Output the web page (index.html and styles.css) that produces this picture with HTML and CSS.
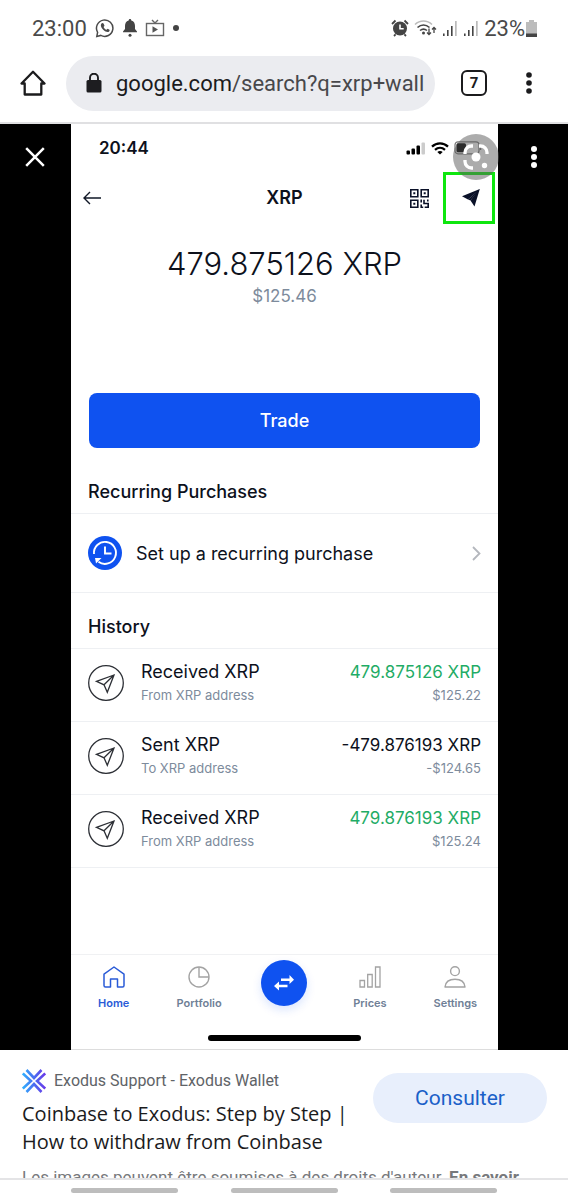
FILE: index.html
```html
<!DOCTYPE html>
<html lang="fr">
<head>
<meta charset="utf-8">
<meta name="viewport" content="width=device-width, initial-scale=1">
<title>XRP wallet</title>
<link rel="stylesheet" href="styles.css">
</head>
<body>
<svg class="defs" width="0" height="0" aria-hidden="true">
  <symbol id="plane" viewBox="1 1 36 36">
    <circle cx="19" cy="19" r="17.300"/>
    <path d="M27 11 9.500 17.300l7.500 3.500 3.300 7.500z M27 11 17 20.800"/>
  </symbol>
</svg>

<header class="device-status">
  <div class="status-group">
    <span class="clock">23:00</span>
    <svg class="whatsapp" width="20" height="20" viewBox="0 0 20 20" fill="none" stroke="#4a4a4a" stroke-width="1.500"><path d="M2.600 14.300A8.200 8.200 0 1 1 5.800 17.400L1.800 18.400z"/><path d="M6.300 5.700c-1 1.300-.5 3.600 1.900 6 2.300 2.200 4.700 2.800 5.900 1.700.8-.8.600-1.500-.1-1.900l-1.300-.7-1.200 1c-1.200-.5-2.400-1.700-2.900-2.900l.9-1.200-.7-1.700c-.4-.9-1.700-1.300-2.500-.3z" fill="#4a4a4a" stroke="none"/></svg>
    <svg class="bell" width="14" height="18" viewBox="0 0 14 18" fill="#444"><path d="M7 0c.9 0 1.300.6 1.300 1.500C11 2.300 12 4.500 12 7v3l2 2.500v.8H0v-.8L2 10V7c0-2.500 1-4.700 3.700-5.500C5.700.6 6.100 0 7 0z"/><circle cx="7" cy="16.300" r="1.500"/></svg>
    <svg width="20" height="18" viewBox="0 0 20 18" fill="none" stroke="#666" stroke-width="1.400"><rect x="1.500" y="4.500" width="17" height="12"/><path d="M7 1l3 3 3-3"/><path d="M7.500 7.300v6.400l5.500-3.200z" fill="#555" stroke="none"/></svg>
    <span class="status-dot"></span>
  </div>
  <div class="status-group status-right">
    <svg width="18" height="18" viewBox="0 0 18 18" fill="none" stroke="#444" stroke-width="1.800"><circle cx="9" cy="9.500" r="7" fill="#444" stroke="none"/><path d="M1 5l3.500-3.500M17 5l-3.500-3.500M3 17l1.600-1.600M15 17l-1.600-1.600"/><path d="M9 5.500v4.300h3.700" stroke="#fff" stroke-width="1.600"/></svg>
    <svg class="wifi" width="23" height="18" viewBox="0 0 23 18" fill="none" stroke="#444" stroke-width="1.600"><path d="M1 5.500C6 .8 13 .8 18 5.500" stroke="#bbb"/><path d="M3.500 8.500c3.600-3.200 8.400-3.200 12 0M6 11.500c2.200-1.800 4.800-1.800 7 0"/><circle cx="9.500" cy="14" r="1.500" fill="#444" stroke="none"/><path d="M15 9.500v6M13 13.500l2 2 2-2M20 14V8.500M18 10.500l2-2 2 2" stroke-width="1.300"/></svg>
    <svg width="16" height="17" viewBox="0 0 16 17" fill="#444"><path d="M1 13.500h1.600V16H1zM5 10h1.600v6H5zM9 6h1.600v10H9z"/><path d="M13 1h1.700v15H13z" fill="#bbb"/></svg>
    <svg width="16" height="17" viewBox="0 0 16 17" fill="#444"><path d="M1 13.500h1.600V16H1zM5 10h1.600v6H5zM9 6h1.600v10H9z"/><path d="M13 1h1.700v15H13z" fill="#bbb"/></svg>
    <span class="battery-text">23%</span>
    <svg class="battery" width="11" height="17" viewBox="0 0 11 17"><path d="M3 0h5v2h3v15H0V2h3z" fill="#bcbcbc"/><path d="M0 13.500h11V17H0z" fill="#444"/></svg>
  </div>
</header>

<nav class="toolbar" aria-label="Navigateur">
  <button class="icon-button" aria-label="Accueil"><svg width="26" height="26" viewBox="0 0 26 26" fill="none" stroke="#1b1b1d" stroke-width="2.300" stroke-linejoin="round"><path d="M1.500 13.500 13 1.700 24.500 13.500H21.300V24.500H4.700V13.500z"/></svg></button>
  <a class="address" href="#">
    <svg width="16" height="20" viewBox="0 0 16 20"><rect x="0.500" y="7" width="15" height="12.500" rx="1.500" fill="#1d1d20"/><path d="M4 8V4.700a4 4 0 0 1 8 0V8" fill="none" stroke="#1d1d20" stroke-width="1.900"/></svg>
    <span class="url"><span class="host">google.com</span>/search?q=xrp+wall</span>
  </a>
  <button class="tabs" aria-label="Onglets">7</button>
  <button class="icon-button" aria-label="Menu"><svg width="6" height="24" viewBox="0 0 6 24" fill="#1b1b1d"><circle cx="3" cy="4" r="2.800"/><circle cx="3" cy="12" r="2.800"/><circle cx="3" cy="20" r="2.800"/></svg></button>
</nav>

<main class="viewer">
  <button class="side-button" aria-label="Fermer"><svg width="20" height="20" viewBox="0 0 20 20" stroke="#fff" stroke-width="2.500"><path d="M1.200 1.200 18.800 18.800M18.800 1.200 1.200 18.800"/></svg></button>

  <section class="phone">
    <div class="phone-status">
      <span>20:44</span>
      <div class="phone-signals">
        <svg width="20" height="13" viewBox="0 0 20 13"><rect x="0.500" y="8.500" width="3.500" height="4" rx="1"/><rect x="5.500" y="6.500" width="3.500" height="6" rx="1"/><rect x="10.500" y="3.500" width="3.500" height="9" rx="1"/><rect x="15.500" y="0.500" width="3.500" height="12" rx="1" fill="#ccc"/></svg>
        <svg width="18" height="13" viewBox="0 0 18 13" fill="none" stroke="#000" stroke-width="2.200"><path d="M1 4.600C5.500.2 12.500.2 17 4.600M4 7.900c3-2.700 7-2.700 10 0"/><path d="M9 12.500 6.300 9.900c1.500-1.300 3.900-1.300 5.400 0z" fill="#000" stroke="none"/></svg>
        <svg width="28" height="14" viewBox="0 0 28 14"><rect x="1" y="0.800" width="24" height="12" rx="3" fill="none" stroke="#777" stroke-width="1.200"/><rect x="2.500" y="2.300" width="9.500" height="9" rx="1.500"/><path d="M26.500 5v4" stroke="#777" stroke-width="1.500"/></svg>
      </div>
      <button class="lens" aria-label="Rechercher dans l'image"><svg width="26" height="26" viewBox="0 0 26 26" fill="none" stroke="#fff" stroke-width="3.300"><path d="M2 10V8.500A6.500 6.500 0 0 1 8.500 2H10M16 2h1.500A6.500 6.500 0 0 1 24 8.500V10M2 16v1.500A6.500 6.500 0 0 0 8.500 24H10"/><circle cx="13" cy="13" r="4.500" fill="#fff" stroke="none"/><circle cx="21.500" cy="21.500" r="2.700" fill="#fff" stroke="none"/></svg></button>
    </div>

    <header class="app-header">
      <button class="back" aria-label="Retour"><svg width="18" height="14" viewBox="0 0 18 14" fill="none" stroke="#111827" stroke-width="1.400"><path d="M18 7H1M7 1 1 7l6 6"/></svg></button>
      <h1>XRP</h1>
      <div class="app-actions">
        <button class="qr" aria-label="QR code"><svg width="19" height="19" viewBox="0 0 19 19" fill="none" stroke="#0a1128" stroke-width="1.600"><path d="M.8.800h7v7h-7zM11.200.800h7v7h-7zM.8 11.200h7v7h-7z"/><path d="M3.300 3.300h2v2h-2zM13.700 3.300h2v2h-2zM3.300 13.700h2v2h-2z" fill="#0a1128" stroke="none"/><path d="M14 10.800v3.700h4.200v3.700h-3.500M17.800 10.500v2M11.200 10.500v3M11.200 15.500v2.700h2"/></svg></button>
        <button class="send" aria-label="Send"><svg width="18" height="18" viewBox="0 0 18 18" fill="#0a1128"><path d="M17.800 0 0 7.300l6 3.200L14.500 3.200 8.500 11.500l4 6z"/><path d="M17.800 0 6 10.500l2.500 1z"/></svg></button>
      </div>
    </header>

    <div class="balance">
      <p class="amount">479.875126 XRP</p>
      <p class="fiat">$125.46</p>
    </div>

    <button class="trade">Trade</button>

    <h2 class="recurring-title">Recurring Purchases</h2>
    <a class="recurring" href="#">
      <svg width="34" height="34" viewBox="0 0 34 34"><circle cx="17" cy="17" r="17" fill="#0f52f0"/><g fill="none" stroke="#fff" stroke-width="1.900"><path d="M6 18A11 11 0 1 1 10.500 25.800"/><path d="M17 10.500v7h6.500"/></g><path d="M7 22h6.500L8 27.500z" fill="#fff"/></svg>
      <span>Set up a recurring purchase</span>
      <svg width="9" height="15" viewBox="0 0 9 15" fill="none" stroke="#b4b7bd" stroke-width="1.800"><path d="M1 1l6.500 6.500L1 14"/></svg>
    </a>

    <h2 class="history-title">History</h2>
    <ul class="history">
      <li>
        <svg class="plane"><use href="#plane"/></svg>
        <div class="entry"><span class="main">Received XRP</span><span class="sub">From XRP address</span></div>
        <div class="entry value"><span class="main gain">479.875126 XRP</span><span class="sub">$125.22</span></div>
      </li>
      <li>
        <svg class="plane"><use href="#plane"/></svg>
        <div class="entry"><span class="main">Sent XRP</span><span class="sub">To XRP address</span></div>
        <div class="entry value"><span class="main">-479.876193 XRP</span><span class="sub">-$124.65</span></div>
      </li>
      <li>
        <svg class="plane"><use href="#plane"/></svg>
        <div class="entry"><span class="main">Received XRP</span><span class="sub">From XRP address</span></div>
        <div class="entry value"><span class="main gain">479.876193 XRP</span><span class="sub">$125.24</span></div>
      </li>
    </ul>

    <nav class="tab-bar" aria-label="Wallet">
      <a class="tab active" href="#"><svg width="22" height="22" viewBox="0 0 22 22" fill="none" stroke="#2a5bd7" stroke-width="1.500" stroke-linejoin="round"><path d="M1 8.200 11 1l10 7.200v11.300q0 1.500-1.500 1.500H14.500v-8h-7v8H2.500Q1 21 1 19.500z"/></svg>Home</a>
      <a class="tab" href="#"><svg width="22" height="22" viewBox="0 0 22 22" fill="none" stroke="#a3a3a3" stroke-width="1.400"><circle cx="11" cy="11" r="10"/><path d="M11 1v10h10"/></svg>Portfolio</a>
      <button class="swap" aria-label="Convert"><svg width="20" height="16" viewBox="0 0 20 16" fill="#fff"><path d="M7 3.500h8.500V0L20 4.700 15.500 9V5.900H7zM13.500 9.800H5V6.500L0 11l5 4.500v-3.300h8.500z"/></svg></button>
      <a class="tab" href="#"><svg width="22" height="22" viewBox="0 0 22 22" fill="none" stroke="#a3a3a3" stroke-width="1.300"><path d="M1 14.500h4.500V21H1zM8.700 8.500h4.500V21H8.700zM16.500 1H21v20h-4.500z"/></svg>Prices</a>
      <a class="tab" href="#"><svg width="22" height="22" viewBox="0 0 22 22" fill="none" stroke="#a3a3a3" stroke-width="1.400" stroke-linejoin="round"><circle cx="11" cy="5.200" r="4.400"/><path d="M1 21c.5-5 4-7.700 10-7.700S20.500 16 21 21z"/></svg>Settings</a>
    </nav>
    <div class="home-indicator"></div>
  </section>

  <button class="side-button" aria-label="Options"><svg width="8" height="24" viewBox="0 0 8 24" fill="#fff"><circle cx="4" cy="4" r="3"/><circle cx="4" cy="12" r="3"/><circle cx="4" cy="20" r="3"/></svg></button>
</main>

<section class="result">
  <div class="result-row">
    <div class="result-text">
      <div class="source">
        <svg width="24" height="24" viewBox="0 0 24 24" fill="none" stroke-width="2.600"><defs><linearGradient id="exodus" x1="0" y1="0" x2="24" y2="0" gradientUnits="userSpaceOnUse"><stop offset="0" stop-color="#2eb4ff"/><stop offset="0.500" stop-color="#4a6df0"/><stop offset="1" stop-color="#6b35e8"/></linearGradient></defs><g stroke="url(#exodus)"><path d="M4.500 1 12 9l7.500-8M4.500 23l7.500-8 7.500 8M.8 4.500 9 12 .8 19.500M23.200 4.500 15 12l8.200 7.500"/></g></svg>
        <span>Exodus Support - Exodus Wallet</span>
      </div>
      <h2 class="result-title">Coinbase to Exodus: Step by Step |<br>How to withdraw from Coinbase</h2>
    </div>
    <a class="visit" href="#">Consulter</a>
  </div>
  <p class="rights">Les images peuvent être soumises à des droits d'auteur. <b>En savoir</b></p>
</section>

<footer class="gesture-bar"><span></span><span></span><span></span></footer>
</body>
</html>
```
FILE: styles.css
```css
* { box-sizing: border-box; }
body {
  margin: 0;
  height: 100vh;
  display: flex;
  flex-direction: column;
  background: #fff;
  color: #1b1b1d;
  font-family: Roboto, sans-serif;
}
h1, h2, p, ul { margin: 0; padding: 0; }
button { padding: 0; border: 0; background: none; font: inherit; color: inherit; }
a { color: inherit; text-decoration: none; }
svg { display: block; flex: none; }
.defs { position: absolute; }

.device-status {
  flex: none;
  height: 56px;
  padding: 0 31px 0 32px;
  display: flex;
  align-items: center;
  justify-content: space-between;
  color: #4a4a4a;
  font-size: 22px;
}
.status-group { display: flex; align-items: center; gap: 8px; }
.status-right { gap: 5px; }
.status-dot { width: 6px; height: 6px; border-radius: 50%; background: #444; }
.battery { margin-left: -4px; }

.toolbar {
  flex: none;
  height: 68px;
  padding: 0 36px 12px 20px;
  display: flex;
  align-items: center;
  border-bottom: 2px solid #e0e0e2;
}
.icon-button { display: grid; place-items: center; }
.address {
  flex: 1;
  min-width: 0;
  height: 55px;
  margin: 0 26px 0 20px;
  padding-left: 20px;
  display: flex;
  align-items: center;
  gap: 14px;
  overflow: hidden;
  border-radius: 28px;
  background: #ebecf0;
  font-size: 22px;
  font-weight: 500;
  color: #48484b;
}
.url { white-space: nowrap; font-weight: 400; }
.host { color: #1b1b1d; }
.tabs {
  width: 26px;
  height: 26px;
  margin-right: 39px;
  border: 2px solid #1b1b1d;
  border-radius: 6px;
  font-size: 15px;
  font-weight: 700;
}

.viewer {
  flex: none;
  display: grid;
  grid-template-columns: 71px 1fr 70px;
  align-items: start;
  background: #000;
}
.side-button { height: 66px; padding-right: 2px; display: grid; place-items: center; }
.phone ~ .side-button { padding: 0 0 0 2px; }
.phone {
  min-width: 0;
  display: flex;
  flex-direction: column;
  background: #fff;
  color: #0d111c;
  font-family: Inter, sans-serif;
  border-bottom: 1px solid #ddd;
}
.phone-status {
  position: relative;
  height: 48px;
  padding: 0 16px 0 28px;
  display: flex;
  align-items: center;
  justify-content: space-between;
  font-size: 17px;
  font-weight: 600;
}
.phone-signals { display: flex; align-items: center; gap: 5px; }
.lens {
  position: absolute;
  top: 10px;
  right: -1px;
  width: 46px;
  height: 46px;
  display: grid;
  place-items: center;
  border-radius: 50%;
  background: rgba(90, 90, 90, 0.5);
}
.app-header {
  height: 52px;
  padding: 0 3px 0 12px;
  display: grid;
  grid-template-columns: 1fr auto 1fr;
  align-items: center;
}
.app-header h1 { padding-right: 9px; font-size: 18px; line-height: 24px; font-weight: 600; }
.app-actions { display: flex; align-items: center; justify-content: flex-end; gap: 14px; }
.back { justify-self: start; }
.send {
  width: 52px;
  height: 52px;
  padding-left: 4px;
  display: grid;
  place-items: center;
  border: 3px solid #0ee60e;
}
.balance { padding-top: 20px; text-align: center; }
.amount { font-size: 31px; line-height: 40px; font-weight: 300; }
.fiat { font-size: 17px; line-height: 24px; color: #7d8b9c; }
.trade {
  height: 55px;
  margin: 85px 18px 0;
  border-radius: 8px;
  background: #0f52f0;
  color: #fff;
  font-size: 18px;
  font-weight: 500;
}
.recurring-title, .history-title {
  padding: 32px 17px 9px;
  border-bottom: 1px solid #eef0f3;
  font-size: 18px;
  line-height: 24px;
  font-weight: 500;
}
.history-title { padding-top: 22px; }
.recurring {
  height: 79px;
  padding: 0 17px;
  display: flex;
  align-items: center;
  gap: 14px;
  border-bottom: 1px solid #eef0f3;
  font-size: 18px;
}
.recurring span { flex: 1; }
.history { list-style: none; }
.history li {
  padding: 10px 17px 16px;
  display: flex;
  align-items: center;
  gap: 17px;
  border-bottom: 1px solid #eef0f3;
}
.plane { width: 36px; height: 36px; margin-top: 2px; fill: none; stroke: #2d3036; stroke-width: 1.3px; }
.entry { display: flex; flex-direction: column; }
.value { flex: 1; align-items: flex-end; }
.main { font-size: 18px; line-height: 26px; }
.value .main { font-size: 17px; }
.sub { font-size: 13px; line-height: 20px; color: #7d8b9c; }
.main.gain { color: #1fac66; }
.tab-bar {
  margin-top: 86px;
  height: 70px;
  display: grid;
  grid-template-columns: repeat(5, 1fr);
  justify-items: center;
  align-items: start;
  border-top: 1px solid #f0f1f3;
}
.tab {
  padding-top: 11px;
  display: flex;
  flex-direction: column;
  align-items: center;
  gap: 6px;
  color: #6f8096;
  font-size: 11px;
  line-height: 18px;
  font-weight: 600;
}
.tab.active { color: #2a5bd7; }
.swap {
  width: 46px;
  height: 46px;
  margin-top: 5px;
  display: grid;
  place-items: center;
  border-radius: 50%;
  background: #0f52f0;
  box-shadow: 0 4px 10px rgba(15, 82, 240, 0.15);
}
.home-indicator {
  width: 36%;
  height: 6px;
  margin: 11px auto 8px;
  border-radius: 3px;
  background: #000;
}

.result {
  flex: 1;
  min-height: 0;
  overflow: hidden;
  padding: 19px 21px 0 22px;
  border-bottom: 2px solid #e4e4e6;
}
.result-row { display: flex; justify-content: space-between; }
.source { display: flex; align-items: center; gap: 8px; color: #606367; font-size: 16px; line-height: 24px; }
.result-title { margin-top: 7px; font-family: "Open Sans", sans-serif; font-size: 20px; line-height: 28px; font-weight: 500; white-space: nowrap; }
.visit {
  width: 174px;
  height: 50px;
  margin-top: 4px;
  display: grid;
  place-items: center;
  border-radius: 25px;
  background: #e8effc;
  color: #1a60c8;
  font-size: 21px;
}
.rights { margin-top: 9px; font-size: 17px; line-height: 24px; color: #77797c; white-space: nowrap; }
.gesture-bar {
  flex: none;
  height: 20px;
  padding: 0 71px;
  display: flex;
  align-items: center;
  justify-content: space-between;
}
.gesture-bar span { width: 107px; height: 5px; border-radius: 3px; background: #bdbdbd; }
```
